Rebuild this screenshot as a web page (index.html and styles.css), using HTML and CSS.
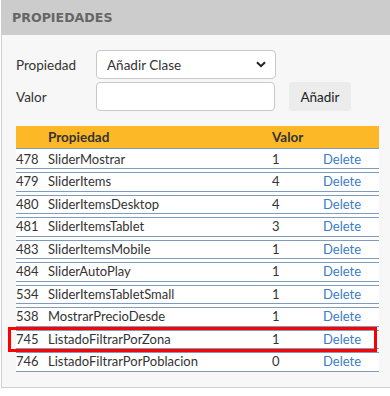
FILE: index.html
```html
<!DOCTYPE html>
<html lang="es">
<head>
<meta charset="utf-8">
<title>Propiedades</title>
<link rel="stylesheet" href="styles.css">
</head>
<body>
<div class="panel">
  <div class="panel-head">PROPIEDADES</div>
  <div class="panel-body">
    <div class="form">
      <label class="lbl">Propiedad</label>
      <div class="select">
        <span>Añadir Clase</span>
        <svg class="chev" width="10" height="7" viewBox="0 0 10 7"><path d="M1 1.2 L5 5.2 L9 1.2" fill="none" stroke="#222" stroke-width="2"/></svg>
      </div>
      <span></span>
      <label class="lbl">Valor</label>
      <div class="input"></div>
      <button class="btn">Añadir</button>
    </div>
    <table class="grid">
      <colgroup><col class="c1"><col class="c2"><col class="c3"><col class="c4"></colgroup>
      <thead>
        <tr><th></th><th>Propiedad</th><th>Valor</th><th></th></tr>
      </thead>
      <tbody>
        <tr><td>478</td><td>SliderMostrar</td><td>1</td><td><a>Delete</a></td></tr>
        <tr><td>479</td><td>SliderItems</td><td>4</td><td><a>Delete</a></td></tr>
        <tr><td>480</td><td>SliderItemsDesktop</td><td>4</td><td><a>Delete</a></td></tr>
        <tr><td>481</td><td>SliderItemsTablet</td><td>3</td><td><a>Delete</a></td></tr>
        <tr><td>483</td><td>SliderItemsMobile</td><td>1</td><td><a>Delete</a></td></tr>
        <tr><td>484</td><td>SliderAutoPlay</td><td>1</td><td><a>Delete</a></td></tr>
        <tr><td>534</td><td>SliderItemsTabletSmall</td><td>1</td><td><a>Delete</a></td></tr>
        <tr><td>538</td><td>MostrarPrecioDesde</td><td>1</td><td><a>Delete</a></td></tr>
        <tr><td>745</td><td>ListadoFiltrarPorZona</td><td>1</td><td><a>Delete</a></td></tr>
        <tr><td>746</td><td>ListadoFiltrarPorPoblacion</td><td>0</td><td><a>Delete</a></td></tr>
      </tbody>
    </table>
  </div>
</div>
<div class="highlight"></div>
</body>
</html>
```
FILE: styles.css
```css
html, body {
  margin: 0;
  padding: 0;
  overflow: hidden;
  background: #ffffff;
}
body {
  position: relative;
  font-family: "Lato", "Noto Sans", sans-serif;
  font-size: 13px;
  color: #333333;
}
.panel {
  margin-left: 1px;
  width: 389px;
  height: 388px;
  box-sizing: border-box;
  border: 1px solid #d0d0d0;
  border-top: none;
  border-right: none;
  background: #f7f7f7;
}
.panel-head {
  height: 35px;
  margin-left: -1px;
  background: #cccccc;
  padding-left: 11px;
  line-height: 36px;
  font-family: "DejaVu Sans", sans-serif;
  font-weight: bold;
  font-size: 12.6px;
  color: #666666;
}
.panel-body {
  padding: 15px 0 0 14px;
}
.form {
  display: grid;
  grid-template-columns: 80px 180px 62px;
  grid-template-rows: 29px 29px;
  row-gap: 3px;
  column-gap: 0;
  align-items: center;
}
.lbl {
  color: #333333;
  font-size: 13.5px;
}
.select {
  height: 29px;
  box-sizing: border-box;
  border: 1px solid #c9c9c9;
  border-radius: 4px;
  background: #ffffff;
  display: flex;
  align-items: center;
  justify-content: space-between;
  padding: 0 9px 0 10px;
  font-size: 13.5px;
}
.input {
  height: 29px;
  width: 179px;
  box-sizing: border-box;
  border: 1px solid #c9c9c9;
  border-radius: 4px;
  background: #ffffff;
}
.btn {
  height: 29px;
  width: 62px;
  margin-left: 13px;
  border: none;
  border-radius: 3px;
  background: #ececec;
  font-family: inherit;
  font-size: 13.5px;
  color: #222222;
  padding: 0;
}
.grid {
  margin-top: 15px;
  width: 363px;
  table-layout: fixed;
  border-collapse: separate;
  border-spacing: 0;
  background: #ffffff;
}
.c1 { width: 32px; }
.c2 { width: 224px; }
.c3 { width: 51px; }
.c4 { width: 56px; }
.grid th {
  background: #fdb827;
  height: 21px;
  padding: 0;
  text-align: left;
  font-weight: bold;
  font-size: 13.5px;
  color: #333333;
  line-height: 22px;
}
.grid td {
  padding: 3px 0 2px;
  height: 13.5px;
  line-height: 13.5px;
  border-bottom: 1px solid #7f9bbd;
  white-space: nowrap;
}
.grid tbody tr:first-child td {
  border-top: 1px solid #7f9bbd;
  padding: 3.5px 0 2px;
}
.grid tbody tr + tr td {
  border-top: 3px solid #ffffff;
  box-shadow: inset 0 1px 0 #7f9bbd;
}
.grid a {
  color: #3a7dc6;
}
.highlight {
  position: absolute;
  left: 8px;
  top: 327px;
  width: 369px;
  height: 25px;
  box-sizing: border-box;
  border: 3px solid #ff0000;
}
```
